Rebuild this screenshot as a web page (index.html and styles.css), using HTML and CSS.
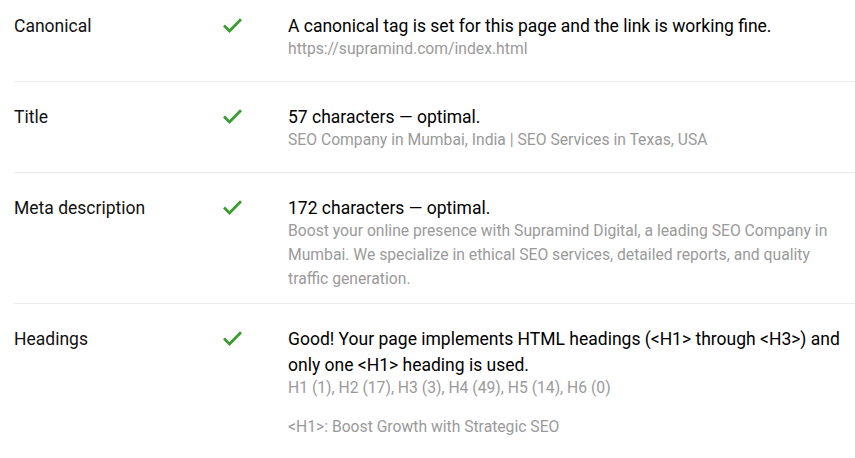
FILE: index.html
```html
<!DOCTYPE html>
<html lang="en">
<head>
<meta charset="utf-8">
<title>SEO checks</title>
<link rel="stylesheet" href="styles.css">
</head>
<body>
<div class="list">
  <div class="row">
    <div class="label">Canonical</div>
    <div class="status"><svg class="check" viewBox="0 0 19 15" width="19" height="15"><path d="M1 7.5 L6.5 13 L18 1.2" fill="none" stroke="#3a9d2f" stroke-width="2.8"/></svg></div>
    <div class="content">
      <div class="main">A canonical tag is set for this page and the link is working fine.</div>
      <div class="sub">https://supramind.com/index.html</div>
    </div>
  </div>
  <div class="row">
    <div class="label">Title</div>
    <div class="status"><svg class="check" viewBox="0 0 19 15" width="19" height="15"><path d="M1 7.5 L6.5 13 L18 1.2" fill="none" stroke="#3a9d2f" stroke-width="2.8"/></svg></div>
    <div class="content">
      <div class="main">57 characters — optimal.</div>
      <div class="sub">SEO Company in Mumbai, India | SEO Services in Texas, USA</div>
    </div>
  </div>
  <div class="row">
    <div class="label">Meta description</div>
    <div class="status"><svg class="check" viewBox="0 0 19 15" width="19" height="15"><path d="M1 7.5 L6.5 13 L18 1.2" fill="none" stroke="#3a9d2f" stroke-width="2.8"/></svg></div>
    <div class="content">
      <div class="main">172 characters — optimal.</div>
      <div class="sub">Boost your online presence with Supramind Digital, a leading SEO Company in Mumbai. We specialize in ethical SEO services, detailed reports, and quality traffic generation.</div>
    </div>
  </div>
  <div class="row">
    <div class="label">Headings</div>
    <div class="status"><svg class="check" viewBox="0 0 19 15" width="19" height="15"><path d="M1 7.5 L6.5 13 L18 1.2" fill="none" stroke="#3a9d2f" stroke-width="2.8"/></svg></div>
    <div class="content">
      <div class="main">Good! Your page implements HTML headings (&lt;H1&gt; through &lt;H3&gt;) and only one &lt;H1&gt; heading is used.</div>
      <div class="sub">H1 (1), H2 (17), H3 (3), H4 (49), H5 (14), H6 (0)</div>
      <div class="sub sub-gap">&lt;H1&gt;: Boost Growth with Strategic SEO</div>
    </div>
  </div>
</div>
</body>
</html>
```
FILE: styles.css
```css
html, body {
  margin: 0;
  padding: 0;
  background: #fff;
}
body {
  font-family: Roboto, "Liberation Sans", Arial, sans-serif;
  color: #000;
  overflow: hidden;
}
.list {
  margin-top: -9px;
  padding-left: 14px;
}
.row {
  display: grid;
  grid-template-columns: 209px 65px 1fr;
  box-sizing: border-box;
  min-height: 91px;
  padding: 22px 0 12px;
  border-bottom: 1px solid #ececec;
}
.row:last-child {
  padding-bottom: 30px;
}
.label {
  font-size: 17.5px;
  line-height: 26px;
  color: #111;
}
.status {
  height: 26px;
}
.check {
  display: block;
  margin-top: 5px;
}
.content {
  padding-right: 10px;
}
.main {
  font-size: 17.5px;
  line-height: 26px;
  color: #000;
}
.main + .sub {
  margin-top: -2px;
}
.sub {
  font-size: 15.7px;
  line-height: 24px;
  color: #9a9a9a;
}
.sub-gap {
  margin-top: 15px;
}
```
